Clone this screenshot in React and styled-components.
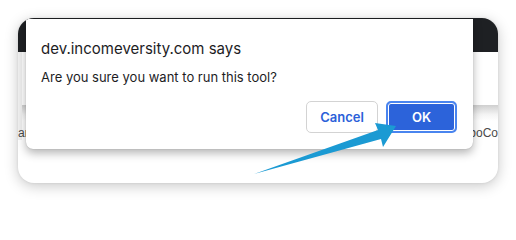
import React from 'react';
import styled, { createGlobalStyle } from 'styled-components';

const GlobalStyle = createGlobalStyle`
  html, body {
    margin: 0;
    padding: 0;
    background: #ffffff;
  }
  body {
    font-family: Inter, "Liberation Sans", Arial, sans-serif;
  }
`;

const App = () => {
  return (
    <Page>
      <GlobalStyle />
      <Frame>
        <TopBar />
        <Behind>
          <Band />
          <BehindRow>
            <BehindText>ar</BehindText>
            <BehindText>boCo</BehindText>
          </BehindRow>
        </Behind>

        <Dialog>
          <Title>dev.incomeversity.com says</Title>
          <Message>Are you sure you want to run this tool?</Message>
          <Actions>
            <Button>Cancel</Button>
            <Button primary>OK</Button>
          </Actions>
        </Dialog>

        <Arrow viewBox="0 0 480 165" aria-hidden="true">
          <polygon points="236,156 360,112 357,105 378,108 365,129 363,121" fill="#1b9ad3" />
        </Arrow>
      </Frame>
    </Page>
  );
};

const Page = styled.div`
  padding: 18px 0 0 18px;
  width: 516px;
  height: 202px;
  box-sizing: border-box;
`;

const Frame = styled.div`
  position: relative;
  width: 480px;
  height: 165px;
  border-radius: 16px;
  overflow: hidden;
  background: #ffffff;
  box-shadow: 0 3px 14px rgba(0, 0, 0, 0.22), 0 0 3px rgba(0, 0, 0, 0.08);
`;

const TopBar = styled.div`
  height: 34px;
  background: #1e2023;
`;

const Behind = styled.div`
  padding-top: 53px;
  border-left: 4px solid #efefef;
`;

const Band = styled.div`
  height: 16px;
  background: linear-gradient(#cfcfcf, #f4f4f4 60%, #ffffff);
`;

const BehindRow = styled.div`
  display: flex;
  justify-content: space-between;
  padding: 5px 0 0 0;
  margin-left: -4px;
`;

const BehindText = styled.span`
  font-family: "Liberation Sans", Arial, sans-serif;
  font-size: 12px;
  color: #4a4a4a;
`;

const Dialog = styled.div`
  position: absolute;
  left: 8px;
  top: 1px;
  width: 447px;
  height: 130px;
  box-sizing: border-box;
  padding: 21px 16px 16px 15px;
  display: flex;
  flex-direction: column;
  background: #ffffff;
  border-radius: 0 0 7px 7px;
  box-shadow: 0 4px 10px rgba(0, 0, 0, 0.3), 0 0 1px rgba(0, 0, 0, 0.3);
`;

const Title = styled.div`
  font-size: 15px;
  line-height: 18px;
  color: #1d1d1f;
`;

const Message = styled.div`
  margin-top: 11px;
  font-size: 13px;
  line-height: 16px;
  color: #1d1d1f;
`;

const Actions = styled.div`
  margin-top: auto;
  display: flex;
  justify-content: flex-end;
  gap: 8px;
`;

const Button = styled.button`
  width: ${(p) => (p.primary ? '71px' : '72px')};
  height: 32px;
  box-sizing: border-box;
  border-radius: 5px;
  font-family: Inter, "Liberation Sans", Arial, sans-serif;
  font-size: 13px;
  font-weight: 600;
  cursor: pointer;
  color: ${(p) => (p.primary ? '#ffffff' : '#2b5fd9')};
  background: ${(p) => (p.primary ? '#2c63da' : '#ffffff')};
  border: ${(p) => (p.primary ? '2px solid #4a85ef' : '1px solid #d3d3d3')};
  box-shadow: ${(p) => (p.primary ? 'inset 0 0 0 1px #ffffff' : 'none')};
`;

const Arrow = styled.svg`
  position: absolute;
  left: 0;
  top: 0;
  width: 480px;
  height: 165px;
  pointer-events: none;
`;

export default App;
